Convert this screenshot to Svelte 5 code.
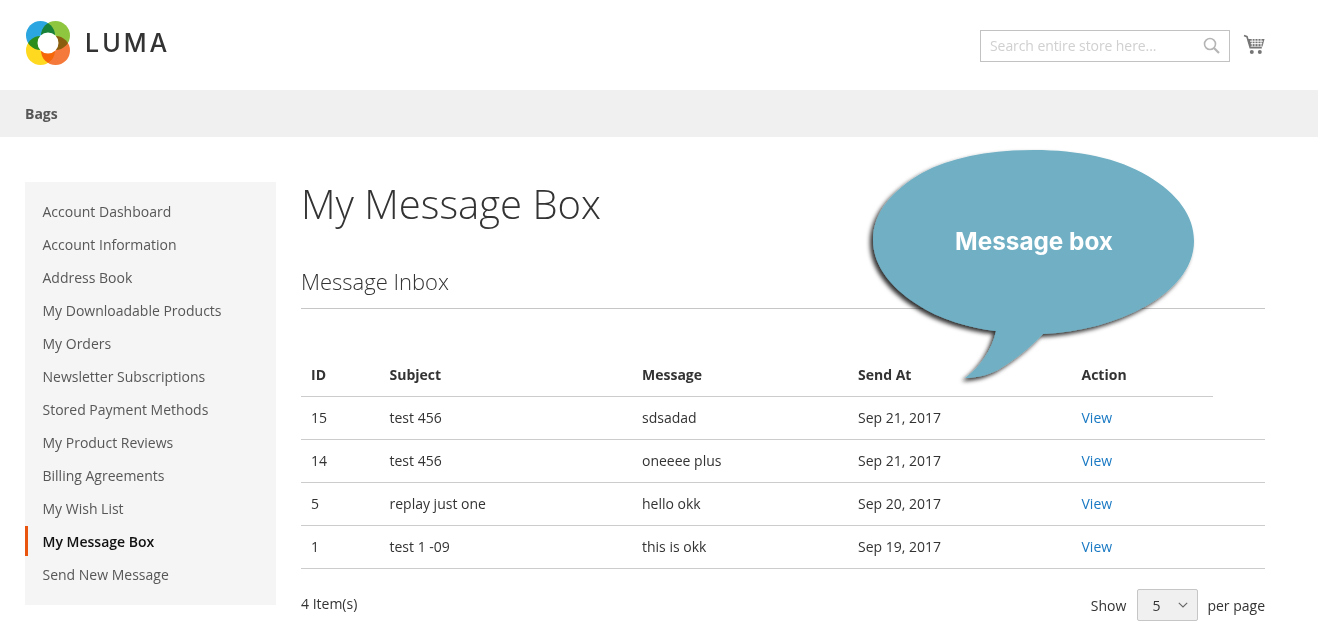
<script lang="ts">
  const NAV = [
    'Account Dashboard',
    'Account Information',
    'Address Book',
    'My Downloadable Products',
    'My Orders',
    'Newsletter Subscriptions',
    'Stored Payment Methods',
    'My Product Reviews',
    'Billing Agreements',
    'My Wish List',
    'My Message Box',
    'Send New Message'
  ];
  const ACTIVE = 'My Message Box';

  const MESSAGES = [
    { id: 15, subject: 'test 456', message: 'sdsadad', sentAt: 'Sep 21, 2017' },
    { id: 14, subject: 'test 456', message: 'oneeee plus', sentAt: 'Sep 21, 2017' },
    { id: 5, subject: 'replay just one', message: 'hello okk', sentAt: 'Sep 20, 2017' },
    { id: 1, subject: 'test 1 -09', message: 'this is okk', sentAt: 'Sep 19, 2017' }
  ];
</script>

<div class="page">
  <header class="top">
    <a class="logo" href="#home">
      <svg width="44" height="44" viewBox="0 0 44 44">
        <g class="petals">
          <circle cx="14.500" cy="14.500" r="14.500" fill="#2ba6e0" />
          <circle cx="29.500" cy="14.500" r="14.500" fill="#8fc640" />
          <circle cx="14.500" cy="29.500" r="14.500" fill="#ffd91f" />
          <circle cx="29.500" cy="29.500" r="14.500" fill="#f5793a" />
        </g>
        <circle cx="22" cy="22" r="10.500" fill="#fff" />
      </svg>
      <span class="wordmark">LUMA</span>
    </a>
    <div class="tools">
      <div class="search">
        <span class="placeholder">Search entire store here...</span>
        <svg width="17" height="17" viewBox="0 0 17 17" fill="none" stroke="#b5b5b5">
          <circle cx="7" cy="7" r="5.5" stroke-width="1.6" />
          <path d="M11 11l5 5" stroke-width="2.2" />
        </svg>
      </div>
      <svg class="cart" width="22" height="21" viewBox="0 0 22 21">
        <path d="M1 1.5l3 1.2 3.2 11h11.6" fill="none" stroke="#757575" stroke-width="1.6" />
        <path d="M4.8 5H21.5l-2 7.5H7Z" fill="#757575" />
        <path d="M7 7.2h13M7.8 9.6h11.4M9.2 5v7.5M12 5v7.5M15 5v7.5M18 5v7.5" stroke="#fff" stroke-width=".9" />
        <circle cx="8.8" cy="18" r="2" fill="#757575" />
        <circle cx="16.8" cy="18" r="2" fill="#757575" />
      </svg>
    </div>
  </header>

  <nav class="bar"><a href="#bags">Bags</a></nav>

  <div class="columns">
    <aside class="side">
      {#each NAV as item}
        <a href="#nav" class:active={item === ACTIVE}>{item}</a>
      {/each}
    </aside>

    <main class="content">
      <h1>My Message Box</h1>
      <h2>Message Inbox</h2>

      <table>
        <thead>
          <tr>
            <th class="c-id">ID</th>
            <th class="c-subject">Subject</th>
            <th class="c-message">Message</th>
            <th class="c-date">Send At</th>
            <th class="c-action">Action</th>
            <th class="c-rest"></th>
          </tr>
        </thead>
        <tbody>
          {#each MESSAGES as row}
            <tr>
              <td>{row.id}</td>
              <td>{row.subject}</td>
              <td>{row.message}</td>
              <td>{row.sentAt}</td>
              <td colspan="2"><a href="#view">View</a></td>
            </tr>
          {/each}
        </tbody>
      </table>

      <div class="pager">
        <span class="count">4 Item(s)</span>
        <div class="limit">
          <span>Show</span>
          <div class="select">
            <span>5</span>
            <svg width="10" height="6" viewBox="0 0 10 6" fill="none" stroke="#666" stroke-width="1.1">
              <path d="M.8.8 5 5l4.2-4.2" />
            </svg>
          </div>
          <span>per page</span>
        </div>
      </div>
    </main>
  </div>

  <!-- annotation pasted on top of the page -->
  <svg class="bubble" width="340" height="250" viewBox="860 140 340 250">
    <defs>
      <filter id="bubble-shadow" x="-10%" y="-10%" width="120%" height="120%">
        <feDropShadow dx="-3" dy="3" stdDeviation="2" flood-color="#000" flood-opacity="0.8" />
      </filter>
    </defs>
    <path
      d="M996 331 C970 328 940 320 915 303 C888 285 873 263 873 240 C873 212 893 190 922 173 C952 157 990 150 1034 150 C1078 150 1118 158 1148 176 C1178 194 1194 216 1194 241 C1194 268 1174 290 1146 306 C1116 323 1080 332 1043 334 C1030 348 1012 362 998 370 C986 376 975 378 965 378 C980 367 992 350 996 331 Z"
      fill="#6fafc4"
      filter="url(#bubble-shadow)"
    />
    <text x="1034" y="249.500" text-anchor="middle">Message box</text>
  </svg>
</div>

<style>
  :global(body) {
    margin: 0;
    background: #fff;
  }

  .page {
    position: relative;
    width: 1318px;
    height: 643px;
    overflow: hidden;
    font-family: 'Open Sans', 'Liberation Sans', sans-serif;
    font-size: 14px;
    color: #333;
  }

  a { text-decoration: none; }

  .top {
    height: 90px;
    padding: 0 53px 0 26px;
    display: flex;
    align-items: flex-start;
    justify-content: space-between;
    box-sizing: border-box;
  }

  .logo {
    display: flex;
    align-items: center;
    gap: 15px;
    margin-top: 21px;
  }

  .petals circle { mix-blend-mode: multiply; }

  .wordmark {
    font-family: 'Inter', 'Lato', sans-serif;
    font-size: 25px;
    font-weight: 500;
    letter-spacing: 3px;
    color: #333;
  }

  .tools {
    display: flex;
    align-items: center;
    gap: 13px;
    margin-top: 30px;
  }

  .search {
    width: 250px;
    height: 32px;
    box-sizing: border-box;
    border: 1px solid #c2c2c2;
    padding: 0 9px 2px 9px;
    display: flex;
    align-items: center;
    justify-content: space-between;
  }

  .placeholder {
    color: #d0d0d0;
    letter-spacing: -0.08px;
  }

  .cart { margin-top: -4px; }

  .bar {
    height: 47px;
    padding-left: 25px;
    background: #f0f0f0;
    display: flex;
    align-items: center;
  }

  .bar a {
    font-weight: 700;
    color: #575757;
  }

  .columns {
    display: flex;
    gap: 25px;
    padding: 45px 53px 0 25px;
  }

  .side {
    width: 251px;
    height: 423px;
    flex: none;
    padding-top: 13px;
    box-sizing: border-box;
    background: #f5f5f5;
    display: flex;
    flex-direction: column;
  }

  .side a {
    position: relative;
    height: 33px;
    line-height: 33px;
    padding-left: 17.500px;
    color: #575757;
  }

  .side a.active {
    font-weight: 600;
    color: #111;
  }

  .side a.active::before {
    content: '';
    position: absolute;
    left: 0;
    top: 1px;
    width: 3px;
    height: 30px;
    background: #e9540f;
  }

  .content {
    flex: 1;
    min-width: 0;
  }

  h1 {
    margin: -1px 0 0;
    font-size: 40px;
    font-weight: 300;
    line-height: 46px;
    color: #333;
  }

  h2 {
    margin: 41px 0 0;
    padding-bottom: 14px;
    border-bottom: 1px solid #c6c6c6;
    font-size: 22px;
    font-weight: 300;
    line-height: 26px;
    color: #333;
  }

  table {
    width: 964px;
    margin-top: 44px;
    border-collapse: collapse;
    table-layout: fixed;
  }

  th, td {
    padding: 0 10px;
    text-align: left;
    box-sizing: content-box;
    border-bottom: 1px solid #ccc;
  }

  th {
    height: 42px;
    padding-bottom: 1px;
    font-weight: 700;
    color: #333;
  }

  td {
    height: 41px;
    padding-bottom: 1px;
  }

  th.c-rest { border-bottom: 0; }

  .c-id { width: 58.500px; }
  .c-subject { width: 232.500px; }
  .c-message { width: 196px; }
  .c-date { width: 203.500px; }
  .c-action { width: 121.500px; }
  .c-rest { width: 32px; }

  td a { color: #1979c3; }

  .pager {
    display: flex;
    justify-content: space-between;
    align-items: center;
    margin-top: 20px;
  }

  .count { padding-bottom: 4px; }

  .limit {
    display: flex;
    align-items: center;
    gap: 10px;
  }

  .select {
    width: 61px;
    height: 32px;
    margin: 0 -1px 0 1px;
    box-sizing: border-box;
    border: 1px solid #c6c6c6;
    border-radius: 2px;
    background: #f0f0f0;
    padding: 0 9px 0 14px;
    display: flex;
    align-items: center;
    justify-content: space-between;
  }

  .bubble {
    position: absolute;
    left: 860px;
    top: 140px;
  }

  .bubble text {
    font-family: 'Inter', 'Open Sans', sans-serif;
    font-size: 24.300px;
    font-weight: 700;
    fill: #fff;
  }
</style>
